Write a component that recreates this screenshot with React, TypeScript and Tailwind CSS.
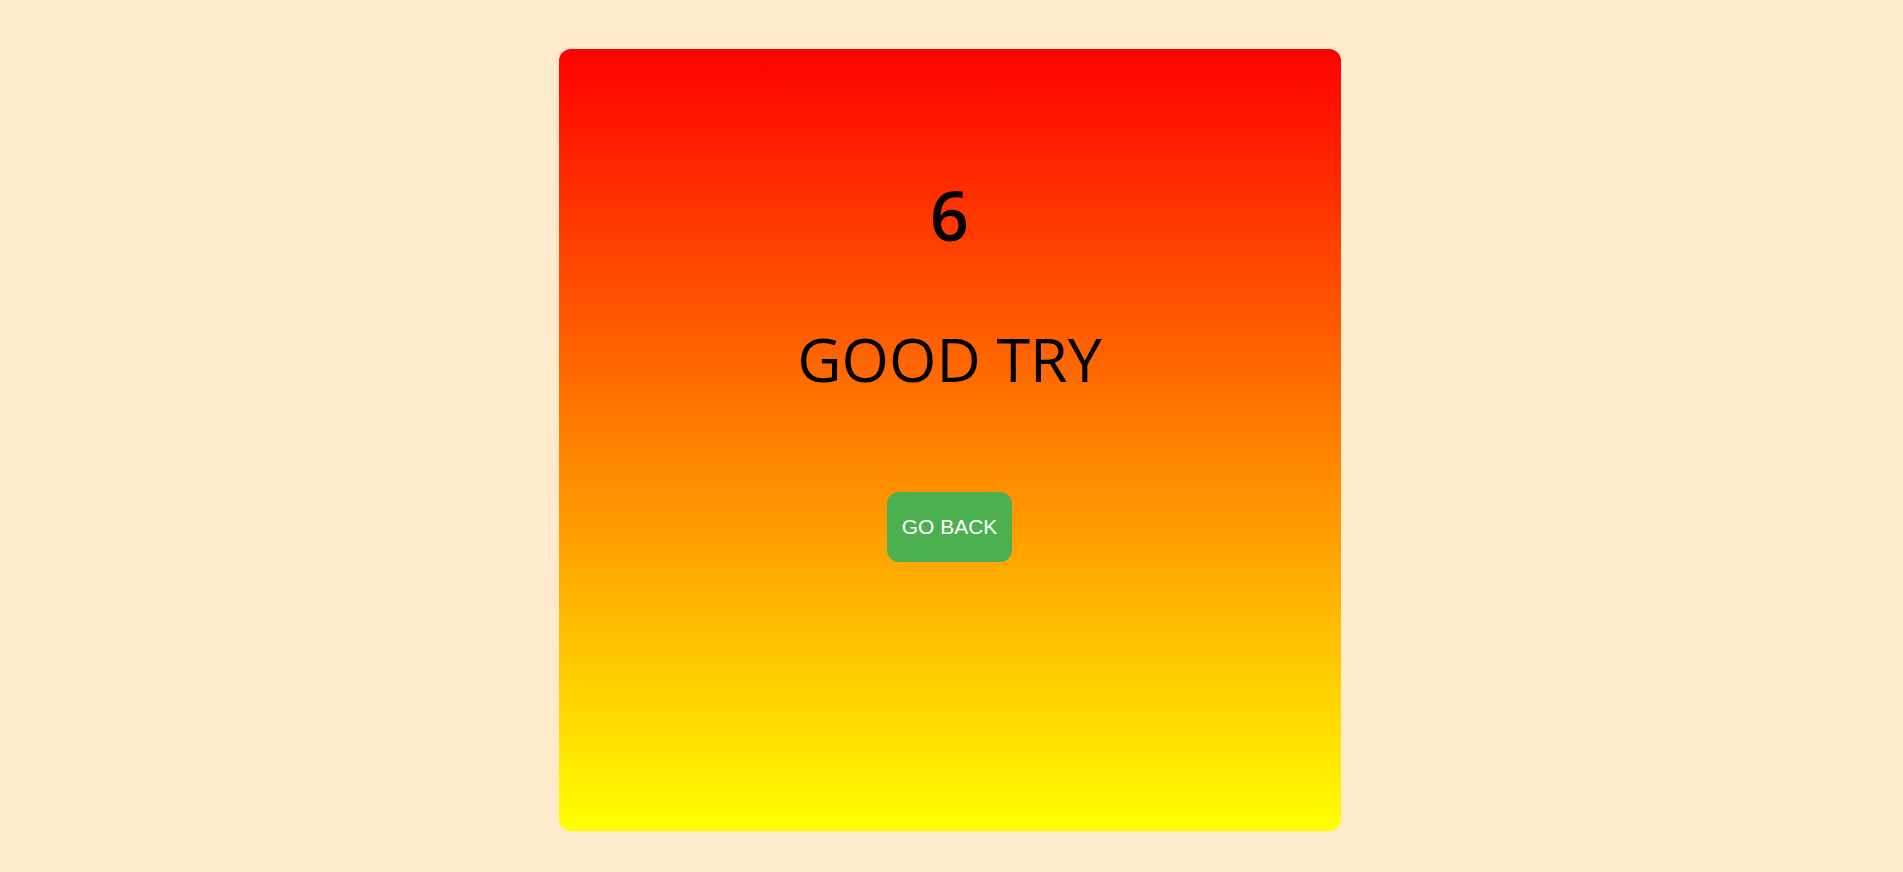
export default function App() {
  return (
    <div className="min-h-screen w-full bg-[#ffeacc] pt-[49px]">
      <div className="ml-[calc(50%-393px)] flex h-[782px] w-[782px] flex-col items-center rounded-xl bg-[linear-gradient(to_bottom,#ff0000,#ffff00)]">
        <div className="mt-[132px] text-[68px] font-semibold leading-none text-black [font-family:'Open_Sans',sans-serif]">
          6
        </div>
        <div className="mt-[79px] text-[61px] leading-none text-black [font-family:'Open_Sans',sans-serif]">
          GOOD TRY
        </div>
        <button className="mt-[103px] flex h-[70px] w-[125px] items-center justify-center rounded-xl bg-[#4caf50] text-[21px] text-white [font-family:'Liberation_Sans',Arial,sans-serif]">
          GO BACK
        </button>
      </div>
    </div>
  );
}
